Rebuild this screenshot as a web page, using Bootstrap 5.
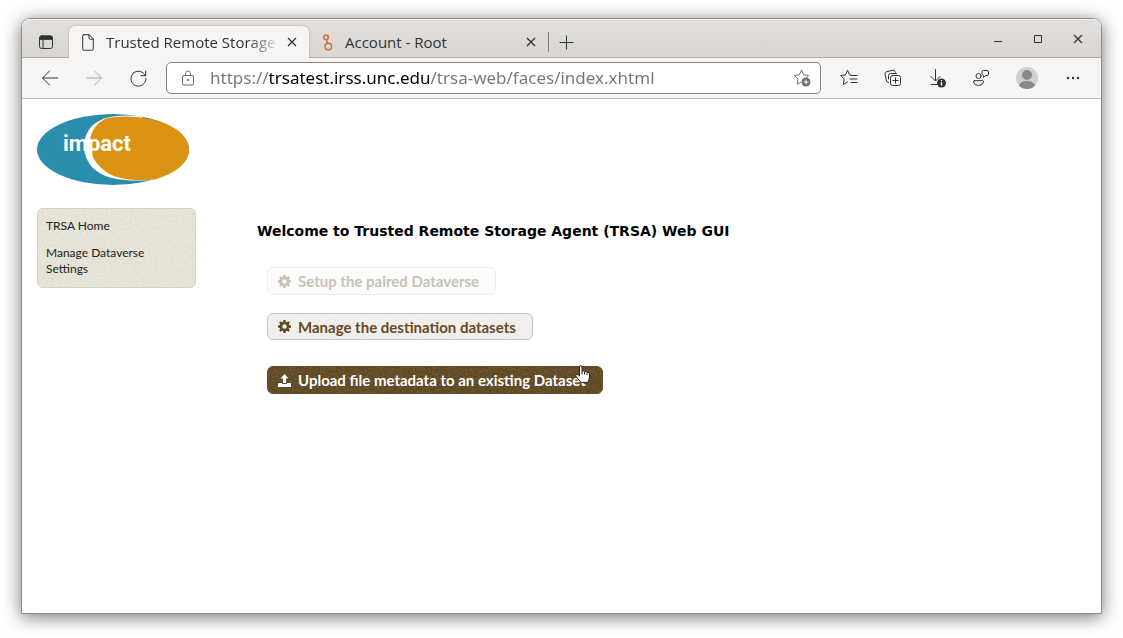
<!DOCTYPE html>
<html lang="en">
<head>
<meta charset="utf-8">
<meta name="viewport" content="width=device-width, initial-scale=1">
<title>Trusted Remote Storage Agent</title>
<link href="https://cdn.jsdelivr.net/npm/bootstrap@5.3.0/dist/css/bootstrap.min.css" rel="stylesheet">
<style>
:root { --ink: #2e3436; --grain: url("data:image/svg+xml,%3Csvg xmlns='http://www.w3.org/2000/svg' width='90' height='90'%3E%3Cfilter id='n'%3E%3CfeTurbulence type='fractalNoise' baseFrequency='.45' numOctaves='2' stitchTiles='stitch'/%3E%3CfeColorMatrix values='0 0 0 0 1 0 0 0 0 1 0 0 0 0 1 1.600 0 0 0 -.5'/%3E%3C/filter%3E%3Crect width='90' height='90' filter='url(%23n)' opacity='.4'/%3E%3C/svg%3E"); }
body { background: #fff; padding: 18px 21px 24px; font-family: "Open Sans", "Noto Sans", sans-serif; }
svg { display: block; flex: none; }
.line-art { fill: none; stroke: currentColor; stroke-linecap: round; stroke-linejoin: round; }
.browser { border: 1px solid #8c8c8c; border-radius: 9px 9px 0 0; background: #fff; box-shadow: 0 3px 18px rgba(0,0,0,.55); }
.title-strip { height: 39px; padding-top: 7px; background: linear-gradient(#e2dfdc, #d9d5d1); border-bottom: 1px solid #b3aca5; border-radius: 8px 8px 0 0; box-shadow: inset 0 1px #f4f3f2; color: var(--ink); }
.tool { border: 0; padding: 0; background: none; color: var(--ink); display: flex; align-items: center; justify-content: center; flex: none; }
.tab-menu { width: 47px; padding-left: 1px; }
.page-tab { height: 32px; width: 239px; padding: 0 9px 0 14px; font-size: 15px; line-height: 32px; color: var(--ink); }
.page-tab a { color: inherit; text-decoration: none; white-space: nowrap; overflow: hidden; }
.page-tab.current { width: 240px; padding-left: 13px; background: #f6f5f4; border-radius: 6px 6px 0 0; box-shadow: 0 0 2px rgba(0,0,0,.3); clip-path: inset(-3px -3px 0 -3px); }
.page-tab.current a { -webkit-mask-image: linear-gradient(90deg, #000 82%, transparent 100%); mask-image: linear-gradient(90deg, #000 82%, transparent 100%); }
.tab-close { width: 16px; height: 32px; }
.tab-rule { width: 1px; height: 20px; background: #77797a; }
.new-tab { width: 34px; height: 32px; }
.win-tools { margin-right: 3px; }
.win-tool { width: 40px; height: 26px; }
.address-row { height: 41px; background: #f6f5f4; border-bottom: 1px solid #c3beb7; padding: 0 6px; }
.nav-tool { width: 44px; height: 40px; }
.nav-tool.idle { color: #a9a9a8; }
.nav-tool.profile { width: 48px; }
.address { height: 32px; margin: 0 6px; padding: 0 9px 0 14px; background: #fff; border: 1px solid #85837f; border-radius: 5px; color: #6b6b6b; }
.address .tool { color: #6f6f6f; }
.address input { min-width: 0; border: 0; outline: 0; padding: 0; margin-left: 15px; height: 28px; font: 17px/28px "Noto Sans", sans-serif; background: linear-gradient(90deg, #767676 59px, #000 59px 220px, #767676 220px); -webkit-background-clip: text; background-clip: text; -webkit-text-fill-color: transparent; color: #767676; }
.web-page { padding: 15px; gap: 61px; }
.side { width: 159px; }
.side-menu { margin-top: 23px; padding: 9px 8px 10px; border: 1px solid #d6d3bd; border-radius: 6px; background: var(--grain) #e1dfd1; font: 12px/16px Lato, sans-serif; display: flex; flex-direction: column; gap: 11px; }
.side-menu a { color: #222; text-decoration: none; }
.main-area { padding-top: 108px; }
.main-area h1 { margin: 0 0 27px; font: bold 14px/18px "DejaVu Sans", sans-serif; color: #000; }
.actions { padding-left: 10px; }
.action { height: 28px; padding: 0 16px 0 10px; border-radius: 6px; font: bold 15px/26px Lato, sans-serif; display: flex; align-items: center; gap: 7px; white-space: nowrap; }
.action:disabled { background: #fcfcfa; border-color: #efeee9; color: #cac2b5; opacity: 1; }
.action.plain { height: 27px; background: var(--grain) #efedeb; border-color: #c9c3bb; color: #654b24; margin: 18px 0 26px; }
.action.strong, .action.strong:hover { background: var(--grain) #5c4520; background-blend-mode: soft-light; border-color: #654b24; color: #fff; position: relative; }
.pointer { position: absolute; right: 11px; top: -2px; }
.logo-word { font: bold 22px Roboto, sans-serif; fill: #fff; }
</style>
</head>
<body class="min-vh-100 d-flex">
<svg width="0" height="0" class="position-absolute" aria-hidden="true">
  <symbol id="cog" viewBox="0 0 16 16"><path fill="currentColor" fill-rule="evenodd" d="M6.700 0h2.600l.4 2.200 1.300.6L12.900 1.500l1.700 1.700-1.300 1.900.6 1.200 2.100.4v2.600l-2.100.4-.6 1.300 1.300 1.900-1.700 1.700-1.900-1.300-1.300.6L9.300 16H6.700l-.4-2.100-1.300-.6-1.900 1.300-1.700-1.700 1.300-1.900-.6-1.300L0 9.300V6.700l2.100-.4.600-1.200-1.300-1.900 1.700-1.700 1.900 1.300 1.300-.6zM8 5.300a2.700 2.700 0 1 0 0 5.400 2.700 2.700 0 0 0 0-5.400z"/></symbol>
  <symbol id="cross" viewBox="0 0 10 10"><path d="M1 1l8 8M9 1L1 9" fill="none" stroke="currentColor" stroke-width="1.300"/></symbol>
</svg>

<div class="browser flex-fill d-flex flex-column">
  <header>
    <div class="title-strip d-flex">
      <button class="tool tab-menu" aria-label="Tab actions">
        <svg class="line-art" width="16" height="16" viewBox="0 0 16 16"><rect x="1.500" y="2" width="13" height="12.500" rx="2"/><path d="M1.500 5V4a2 2 0 0 1 2-2h9a2 2 0 0 1 2 2v1z" fill="currentColor"/><path d="M5 5v9.500"/></svg>
      </button>
      <div class="page-tab current d-flex align-items-center">
        <svg class="line-art" width="12" height="17" viewBox="0 0 12 17"><path d="M2 .7h5.300l4 4.300v9.800q0 1.400-1.400 1.400H2q-1.300 0-1.300-1.400V2Q.7.7 2 .7zM7 .8V4q0 1.200 1.200 1.200h3"/></svg>
        <a href="#" class="flex-fill ms-2 ps-1 me-1">Trusted Remote Storage A</a>
        <button class="tool tab-close" aria-label="Close tab"><svg width="10" height="10"><use href="#cross"/></svg></button>
      </div>
      <div class="page-tab d-flex align-items-center">
        <svg width="10" height="17" viewBox="0 0 10 17" fill="none" stroke="#d0693a" stroke-width="1.400"><circle cx="3" cy="3.300" r="2.300"/><circle cx="5.300" cy="12.500" r="3.300"/><path d="M3.500 5.500l1 3.700"/></svg>
        <a href="#" class="flex-fill ms-2 ps-1 me-2">Account - Root</a>
        <button class="tool tab-close" aria-label="Close tab"><svg width="10" height="10"><use href="#cross"/></svg></button>
      </div>
      <div class="tab-rule align-self-center"></div>
      <button class="tool new-tab" aria-label="New tab"><svg class="line-art" width="15" height="15" viewBox="0 0 15 15"><path d="M7.500 1v13M1 7.500h13"/></svg></button>
      <div class="win-tools d-flex ms-auto">
        <button class="tool win-tool" aria-label="Minimize"><svg width="10" height="10" viewBox="0 0 10 10"><path d="M1 7.500h8" stroke="currentColor"/></svg></button>
        <button class="tool win-tool" aria-label="Maximize"><svg width="10" height="10" viewBox="0 0 10 10"><path d="M1.500 1.500h7v7h-7z" fill="none" stroke="currentColor"/></svg></button>
        <button class="tool win-tool" aria-label="Close"><svg width="10" height="10"><use href="#cross"/></svg></button>
      </div>
    </div>
    <div class="address-row d-flex align-items-center">
      <button class="tool nav-tool" aria-label="Back"><svg class="line-art" width="16" height="16" viewBox="0 0 16 16"><path d="M15.500 8H.7M7.500 1L.5 8l7 7"/></svg></button>
      <button class="tool nav-tool idle" aria-label="Forward"><svg class="line-art" width="16" height="16" viewBox="0 0 16 16"><path d="M.5 8h14.800M8.500 1l7 7-7 7"/></svg></button>
      <button class="tool nav-tool" aria-label="Reload"><svg class="line-art" width="17" height="17" viewBox="0 0 17 17"><path d="M15.300 5.500A7.500 7.500 0 1 0 16 8.500M15.700 1v4.700H11"/></svg></button>
      <div class="address flex-fill d-flex align-items-center">
        <svg class="line-art" width="14" height="16" viewBox="0 0 14 16"><rect x="1.500" y="5.500" width="11" height="9.500" rx="1.500"/><path d="M4.500 5V3.500a2.500 2.500 0 0 1 5 0V5"/><circle cx="7" cy="10" r=".6" fill="currentColor"/></svg>
        <input class="flex-fill" type="text" aria-label="Address" value="https://trsatest.irss.unc.edu/trsa-web/faces/index.xhtml">
        <button class="tool" aria-label="Add to favorites"><svg class="line-art" width="18" height="18" viewBox="0 0 18 18"><path d="M8.500 1.200l2.200 4.600 5 .7-2.500 2.500M8.500 1.200L6.300 5.800l-5 .7L5 10l-.9 5.200L8 13.200"/><circle cx="13" cy="13" r="4.500" fill="currentColor" stroke="none"/><path stroke="#fff" d="M13 11v4M11 13h4"/></svg></button>
      </div>
      <button class="tool nav-tool" aria-label="Favorites"><svg class="line-art" width="18" height="18" viewBox="0 0 18 18"><path d="M11.500 6.300L9.500 5.800 7.500 1.200 5.500 5.800l-4.800.7L4.200 10l-.8 5.500L7.500 13M11 6.500h6M10 10h7M11 13.500h6"/></svg></button>
      <button class="tool nav-tool" aria-label="Collections"><svg class="line-art" width="18" height="18" viewBox="0 0 18 18"><rect x="6.500" y="6.500" width="10" height="10" rx="2"/><path d="M11.500 8.800v5.400M8.800 11.500h5.400M4.500 13.500Q3 13.500 2.500 12L1 4.800Q.8 3.300 2.300 2.900L9 1q1.500-.2 1.900 1.200l.3 1.200M4.500 10V6.500q0-2 2-2h6"/></svg></button>
      <button class="tool nav-tool" aria-label="Downloads"><svg class="line-art" width="18" height="20" viewBox="-1 0 18 20"><path d="M6.500 1.500v11M2 8.500L6.500 13 11 8.500M2 16.500h6"/><circle cx="12.500" cy="15" r="4.500" fill="currentColor" stroke="none"/><path stroke="#fff" stroke-width="1.400" d="M12.500 14.800V17M12.500 12.600v.1"/></svg></button>
      <button class="tool nav-tool" aria-label="Send feedback"><svg class="line-art" width="18" height="18" viewBox="0 0 18 18"><circle cx="6.500" cy="7" r="2.500"/><path d="M2.500 11.700h8q1.200 0 1 1.300-.7 3.500-5 3.500T1.500 13q-.2-1.300 1-1.300zM10 4V3q0-1.500 1.500-1.500H15q1.500 0 1.500 1.500v2q0 1.500-1.500 1.500h-1.500l-2 2v-2Q10 6 10 5z"/></svg></button>
      <button class="tool nav-tool profile" aria-label="Profile"><svg width="22" height="22" viewBox="0 0 22 22"><clipPath id="disc"><circle cx="11" cy="11" r="11"/></clipPath><g clip-path="url(#disc)"><path fill="#d2d0ce" d="M0 0h22v22H0z"/><circle cx="11" cy="8" r="5" fill="#8a8886"/><ellipse cx="11" cy="19" rx="8" ry="5" fill="#8a8886"/></g></svg></button>
      <button class="tool nav-tool" aria-label="More"><svg width="14" height="4" viewBox="0 0 14 4" fill="currentColor"><circle cx="2" cy="2" r="1.200"/><circle cx="7" cy="2" r="1.200"/><circle cx="12" cy="2" r="1.200"/></svg></button>
    </div>
  </header>

  <div class="web-page d-flex">
    <aside class="side flex-shrink-0">
      <svg width="152" height="71" viewBox="0 0 152 71" role="img" aria-label="impact">
        <ellipse cx="76" cy="35.500" rx="76" ry="35.500" fill="#298dab"/>
        <path fill="#fff" d="M105 2.500C82-.5 63 2.500 54 13 44 25 45 43 56 54c11 11 31 14 60 12z"/>
        <path fill="#db9112" d="M74 3.500C104-1 152 9 152 36c0 13-14 24-35 29.500-24 2-42-1-52-11C49 41 49 18 64 7.500 67 5 70 4 74 3.500z"/>
        <text class="logo-word" x="26" y="37">impact</text>
      </svg>
      <nav class="side-menu">
        <a href="#">TRSA Home</a>
        <a href="#">Manage Dataverse Settings</a>
      </nav>
    </aside>
    <main class="main-area">
      <h1>Welcome to Trusted Remote Storage Agent (TRSA) Web GUI</h1>
      <div class="actions d-flex flex-column align-items-start">
        <button class="btn action" disabled><svg width="13" height="13"><use href="#cog"/></svg>Setup the paired Dataverse</button>
        <button class="btn action plain"><svg width="13" height="13"><use href="#cog"/></svg>Manage the destination datasets</button>
        <button class="btn action strong">
          <svg width="13" height="13" viewBox="0 0 13 13" fill="currentColor"><path d="M6.500 0L2.500 4.500H5V9h3V4.500h2.500zM0 9h4v1h5V9h4v4H0z"/></svg>Upload file metadata to an existing Dataset
          <svg class="pointer" width="16" height="18" viewBox="0 0 16 18"><path fill="#fff" stroke="#222" d="M4.500 10V2q0-1.500 1.200-1.500T7 2v4q2-.7 2.500.7 2-.7 2.500.7 2.500-.5 2.500 1.500v4l-1.500 4.500H6L1 11.500q-.7-1.500.7-2t2.800 1.500z"/><path stroke="#222" d="M7 6v3.500M9.500 7v2.500M12 7.500v2.500"/></svg>
        </button>
      </div>
    </main>
  </div>
</div>
<script src="https://cdn.jsdelivr.net/npm/bootstrap@5.3.0/dist/js/bootstrap.bundle.min.js"></script>
</body>
</html>
